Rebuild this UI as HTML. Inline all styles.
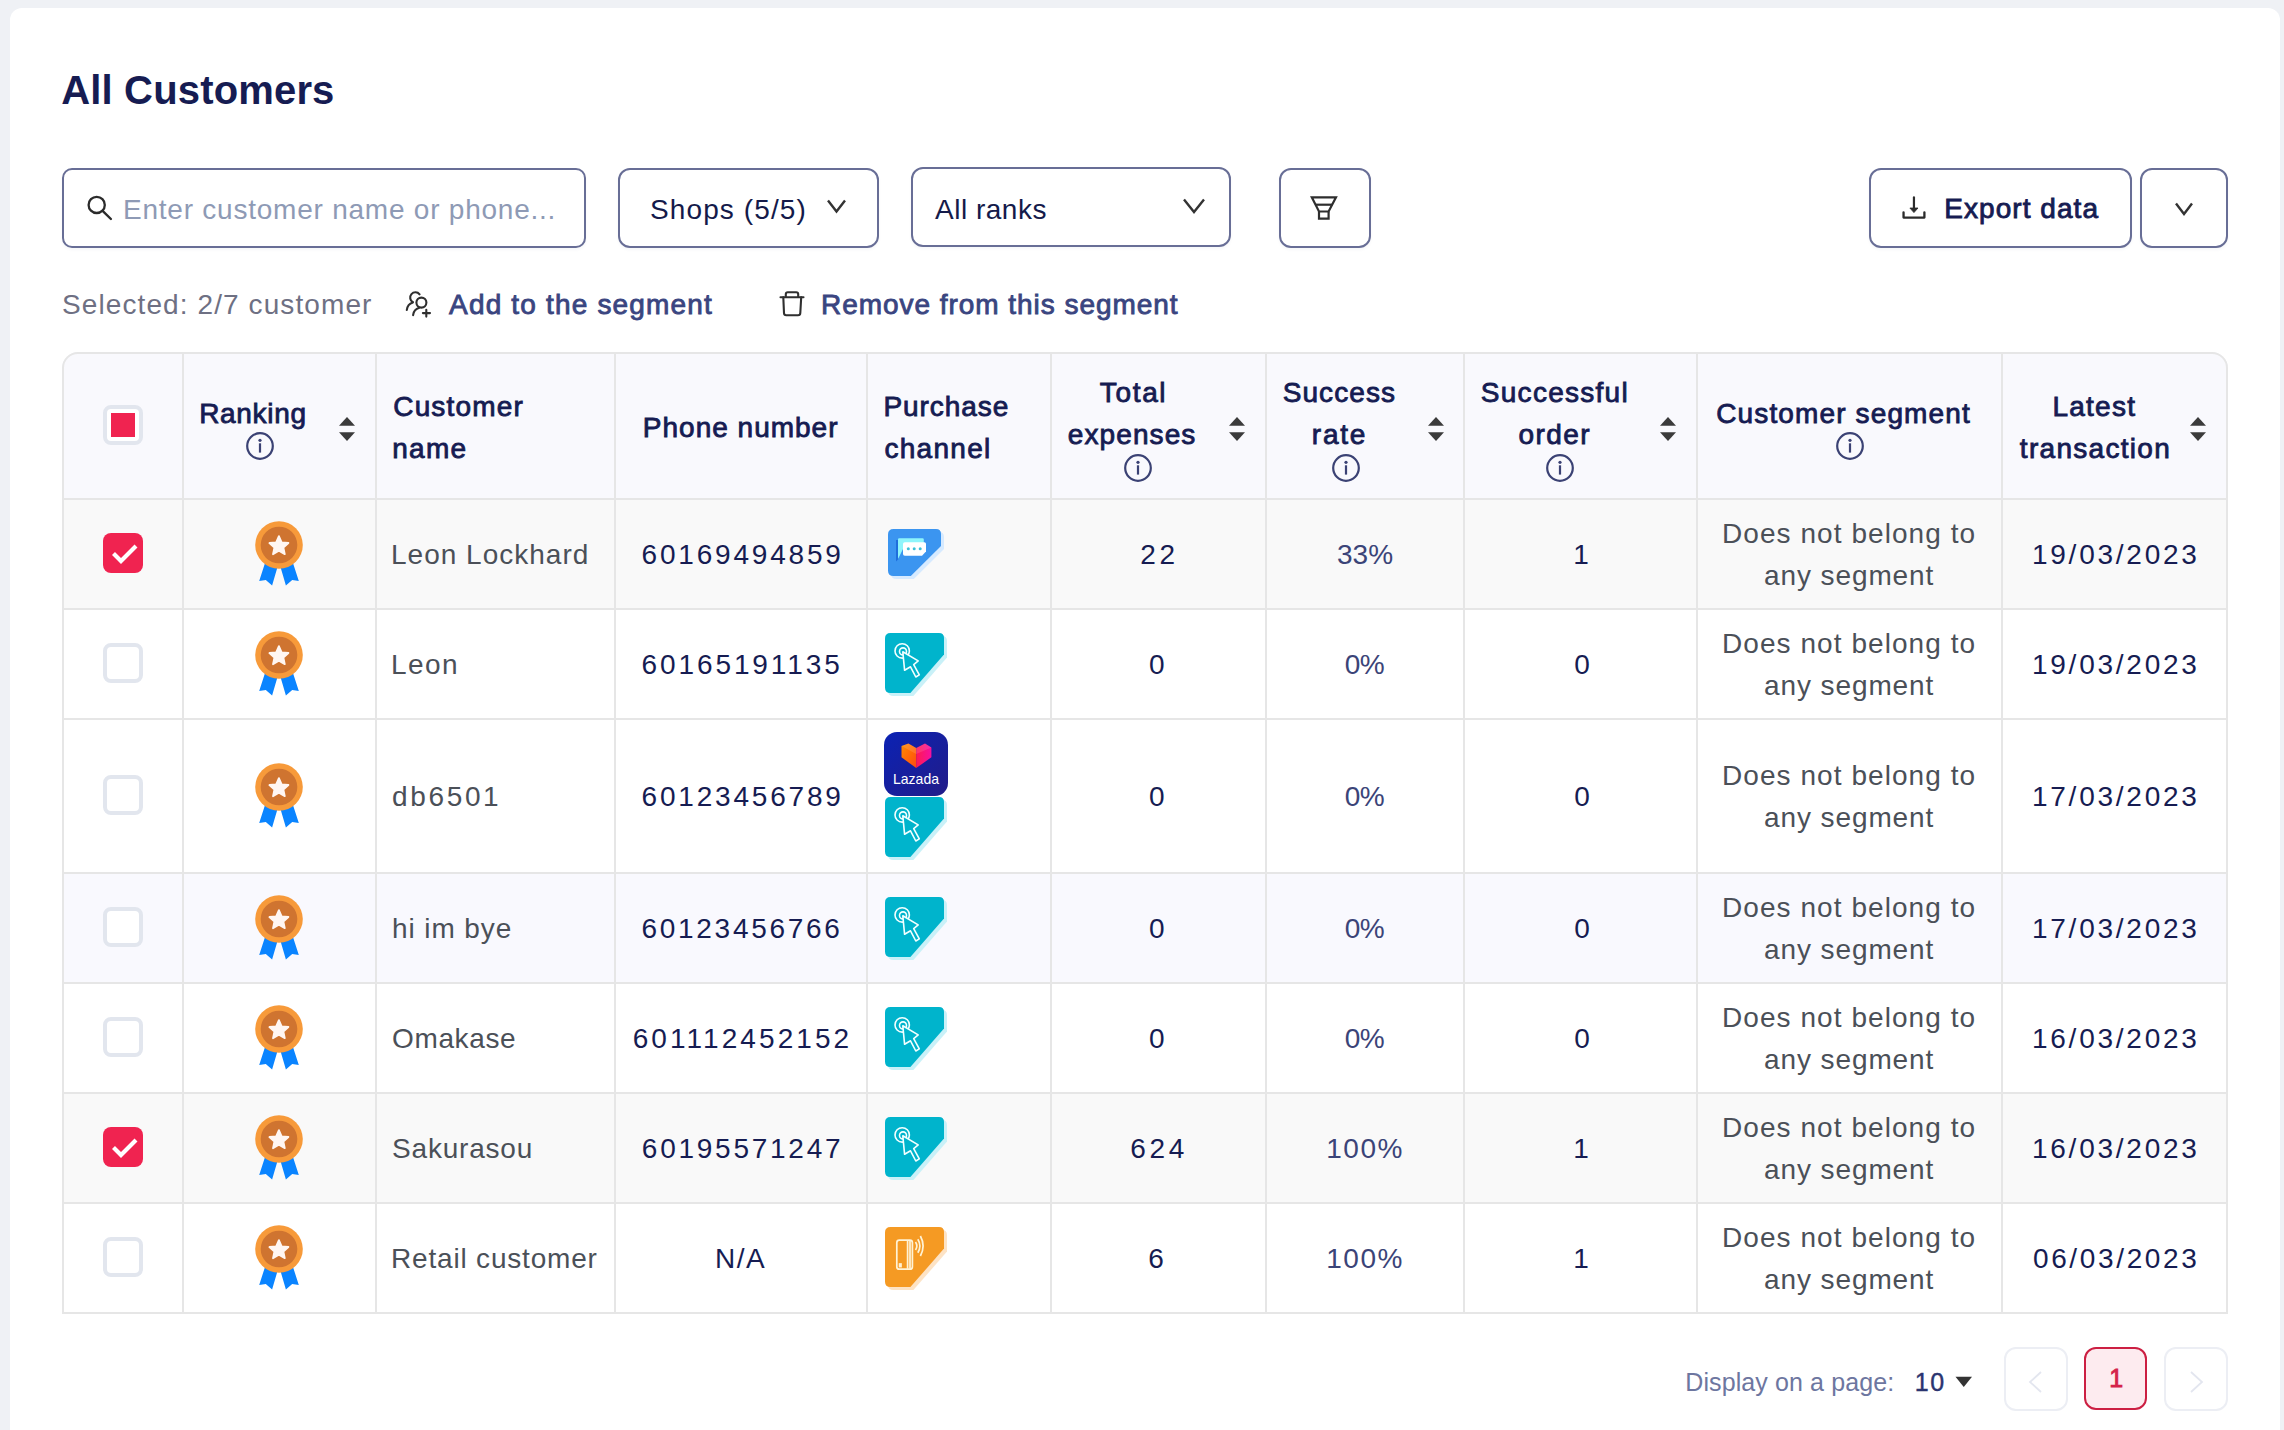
<!DOCTYPE html>
<html><head><meta charset="utf-8"><title>All Customers</title>
<style>
html,body{margin:0;padding:0;}
body{width:2284px;height:1430px;overflow:hidden;background:#eff1f5;position:relative;font-family:"Liberation Sans",sans-serif;}
body>div,body>svg{position:absolute;box-sizing:content-box;}
.t{white-space:nowrap;}
</style></head><body>
<div style="left:10px;top:8px;width:2270px;height:1440px;background:#fff;border-radius:12px;"></div>
<div class="t" id="t0" style="left:61.20px;top:69.64px;font-size:40px;line-height:40px;color:#161c52;font-weight:700;letter-spacing:0.167px;">All Customers</div>
<div style="left:62px;top:168px;width:520px;height:76px;border:2px solid #686e96;border-radius:10px;background:#fff;box-shadow:0 2px 3px rgba(30,40,90,0.04);"></div>
<svg style="left:86px;top:194px;" width="28" height="28" viewBox="0 0 28 28"><circle cx="10.7" cy="10.9" r="8.1" fill="none" stroke="#2b2b2b" stroke-width="2.3"/><line x1="16.6" y1="16.8" x2="24.9" y2="25" stroke="#2b2b2b" stroke-width="2.4" stroke-linecap="round"/></svg>
<div class="t" id="t1" style="left:123.04px;top:195.50px;font-size:28px;line-height:28px;color:#8e9ab5;letter-spacing:0.767px;">Enter customer name or phone...</div>
<div style="left:618px;top:168px;width:257px;height:76px;border:2px solid #686e96;border-radius:12px;background:#fff;box-shadow:0 2px 3px rgba(30,40,90,0.04);"></div>
<div class="t" id="t2" style="left:650.04px;top:195.80px;font-size:28px;line-height:28px;color:#141a4a;letter-spacing:1.100px;">Shops (5/5)</div>
<svg style="left:826px;top:198px;" width="21" height="16" viewBox="0 0 21 16"><polyline points="2,2.5 10.5,13.5 19,2.5" fill="none" stroke="#333" stroke-width="2.4"/></svg>
<div style="left:911px;top:167px;width:316px;height:76px;border:2px solid #686e96;border-radius:12px;background:#fff;box-shadow:0 2px 3px rgba(30,40,90,0.04);"></div>
<div class="t" id="t3" style="left:935.04px;top:195.80px;font-size:28px;line-height:28px;color:#141a4a;letter-spacing:0.500px;">All ranks</div>
<svg style="left:1182px;top:197px;" width="24" height="18" viewBox="0 0 24 18"><polyline points="2,2.5 12,15 22,2.5" fill="none" stroke="#333" stroke-width="2.4"/></svg>
<div style="left:1279px;top:168px;width:88px;height:76px;border:2px solid #686e96;border-radius:12px;background:#fff;box-shadow:0 2px 3px rgba(30,40,90,0.04);"></div>
<svg style="left:1308px;top:194px;" width="32" height="28" viewBox="0 0 32 28"><g fill="none" stroke="#2e2e2e" stroke-width="2.2"><path d="M3.8 3.3 H28 L20.6 17.5 H11 Z"/><path d="M7.5 10.7 H24.3"/><path d="M11 17.5 V24.6 H20.6 V17.5"/></g></svg>
<div style="left:1869px;top:168px;width:259px;height:76px;border:2px solid #686e96;border-radius:12px;background:#fff;box-shadow:0 2px 3px rgba(30,40,90,0.04);"></div>
<svg style="left:1900px;top:195px;" width="28" height="26" viewBox="0 0 28 26"><line x1="13.95" y1="2.4" x2="13.95" y2="14" stroke="#2b2b2b" stroke-width="2.2" stroke-linecap="round"/><polygon points="9.9,13 18,13 13.95,17.6" fill="#2b2b2b" stroke="#2b2b2b" stroke-width="0.8" stroke-linejoin="round"/><path d="M3.55 17.3 V22.6 H24.4 V17.3" fill="none" stroke="#2b2b2b" stroke-width="2.3" stroke-linecap="round" stroke-linejoin="round"/></svg>
<div class="t" id="t4" style="left:1944.24px;top:195.00px;font-size:28px;line-height:28px;color:#161c52;-webkit-text-stroke:0.85px #161c52;letter-spacing:1.060px;">Export data</div>
<div style="left:2140px;top:168px;width:84px;height:76px;border:2px solid #686e96;border-radius:12px;background:#fff;box-shadow:0 2px 3px rgba(30,40,90,0.04);"></div>
<svg style="left:2174px;top:201px;" width="20" height="16" viewBox="0 0 20 16"><polyline points="2,2.5 10,13 18,2.5" fill="none" stroke="#333" stroke-width="2.4"/></svg>
<div class="t" id="t5" style="left:62.04px;top:290.80px;font-size:28px;line-height:28px;color:#6e7083;letter-spacing:1.095px;">Selected: 2/7 customer</div>
<svg style="left:400px;top:286px;" width="36" height="36" viewBox="0 0 36 36"><g fill="none" stroke="#2f2f2f" stroke-width="2.1" stroke-linecap="round"><path d="M19.6 8.3 A5.3 5.3 0 1 0 12.8 16.2"/><path d="M12.8 16.4 C9.2 17.4 7.2 20.5 6.8 24"/><circle cx="21.4" cy="16.6" r="5"/><path d="M19.3 21.8 C15.5 22.8 13.5 25.5 13.1 29.2"/><path d="M22.9 27.1 H30 M26.3 23.7 V30.6"/></g></svg>
<div class="t" id="t6" style="left:449.04px;top:290.80px;font-size:28px;line-height:28px;color:#3a4580;-webkit-text-stroke:0.85px #3a4580;letter-spacing:1.176px;">Add to the segment</div>
<svg style="left:774px;top:286px;" width="36" height="36" viewBox="0 0 36 36"><g fill="none" stroke="#2f2f2f" stroke-width="2.1" stroke-linecap="round"><path d="M6.5 11.2 H29.5"/><path d="M11.8 11 V8.3 Q11.8 6.3 13.8 6.3 H22.2 Q24.2 6.3 24.2 8.3 V11"/><path d="M9.3 11.3 L10 27 Q10.1 29.2 12.3 29.2 H24 Q26.2 29.2 26.3 27 L27.2 11.3"/></g></svg>
<div class="t" id="t7" style="left:821.04px;top:290.80px;font-size:28px;line-height:28px;color:#3a4580;-webkit-text-stroke:0.85px #3a4580;letter-spacing:0.957px;">Remove from this segment</div>
<div style="left:62px;top:352px;width:2166px;height:962px;border-radius:16px 16px 0 0;overflow:hidden;background:#fff;"><div style="position:absolute;left:0;top:0;width:100%;height:146px;background:#f9f9fd"></div><div style="position:absolute;left:0;top:256px;width:100%;height:0px;"></div><div style="position:absolute;left:0;top:148px;width:100%;height:108px;background:#f9f9f9"></div><div style="position:absolute;left:0;top:522px;width:100%;height:108px;background:#f9f9fe"></div><div style="position:absolute;left:0;top:742px;width:100%;height:108px;background:#f9f9f9"></div></div>
<div style="left:182px;top:354px;width:2px;height:960px;background:#e6e6e6;"></div>
<div style="left:375px;top:354px;width:2px;height:960px;background:#e6e6e6;"></div>
<div style="left:614px;top:354px;width:2px;height:960px;background:#e6e6e6;"></div>
<div style="left:866px;top:354px;width:2px;height:960px;background:#e6e6e6;"></div>
<div style="left:1050px;top:354px;width:2px;height:960px;background:#e6e6e6;"></div>
<div style="left:1265px;top:354px;width:2px;height:960px;background:#e6e6e6;"></div>
<div style="left:1463px;top:354px;width:2px;height:960px;background:#e6e6e6;"></div>
<div style="left:1696px;top:354px;width:2px;height:960px;background:#e6e6e6;"></div>
<div style="left:2001px;top:354px;width:2px;height:960px;background:#e6e6e6;"></div>
<div style="left:62px;top:498px;width:2166px;height:2px;background:#e6e6e6;"></div>
<div style="left:62px;top:608px;width:2166px;height:2px;background:#e6e6e6;"></div>
<div style="left:62px;top:718px;width:2166px;height:2px;background:#e6e6e6;"></div>
<div style="left:62px;top:872px;width:2166px;height:2px;background:#e6e6e6;"></div>
<div style="left:62px;top:982px;width:2166px;height:2px;background:#e6e6e6;"></div>
<div style="left:62px;top:1092px;width:2166px;height:2px;background:#e6e6e6;"></div>
<div style="left:62px;top:1202px;width:2166px;height:2px;background:#e6e6e6;"></div>
<div style="left:62px;top:1312px;width:2166px;height:2px;background:#e6e6e6;"></div>
<div style="left:62px;top:352px;width:2162px;height:958px;border:2px solid #e6e6e6;border-radius:16px 16px 0 0;"></div>
<div style="left:103px;top:405px;width:32px;height:32px;border:4px solid #e2e6ee;border-radius:8px;background:#fff"></div>
<div style="left:111px;top:413px;width:24px;height:24px;background:#f02350;"></div>
<div class="t" id="t8" style="left:199.24px;top:399.90px;font-size:28px;line-height:28px;color:#161c52;-webkit-text-stroke:0.85px #161c52;letter-spacing:0.667px;">Ranking</div>
<svg style="left:245px;top:431px;" width="30" height="30" viewBox="0 0 30 30"><circle cx="15" cy="15" r="12.8" fill="none" stroke="#3b4274" stroke-width="2.2"/><circle cx="15" cy="9.3" r="1.6" fill="#3b4274"/><rect x="13.9" y="12.3" width="2.2" height="9.3" fill="#3b4274"/></svg>
<svg style="left:339px;top:417px;" width="16" height="25" viewBox="0 0 16 25"><polygon points="0,8.8 8,0 16,8.8" fill="#3b3b3b"/><polygon points="0,15.2 16,15.2 8,24" fill="#3b3b3b"/></svg>
<div class="t" id="t9" style="left:393.24px;top:392.90px;font-size:28px;line-height:28px;color:#161c52;-webkit-text-stroke:0.85px #161c52;letter-spacing:1.171px;">Customer</div>
<div class="t" id="t10" style="left:392.24px;top:435.00px;font-size:28px;line-height:28px;color:#161c52;-webkit-text-stroke:0.85px #161c52;letter-spacing:1.267px;">name</div>
<div class="t" id="t11" style="left:642.84px;top:414.00px;font-size:28px;line-height:28px;color:#161c52;-webkit-text-stroke:0.85px #161c52;letter-spacing:1.000px;">Phone number</div>
<div class="t" id="t12" style="left:883.44px;top:392.90px;font-size:28px;line-height:28px;color:#161c52;-webkit-text-stroke:0.85px #161c52;letter-spacing:0.943px;">Purchase</div>
<div class="t" id="t13" style="left:884.44px;top:435.00px;font-size:28px;line-height:28px;color:#161c52;-webkit-text-stroke:0.85px #161c52;letter-spacing:1.300px;">channel</div>
<div class="t" id="t14" style="left:1099.84px;top:378.90px;font-size:28px;line-height:28px;color:#161c52;-webkit-text-stroke:0.85px #161c52;letter-spacing:1.650px;">Total</div>
<div class="t" id="t15" style="left:1067.84px;top:420.60px;font-size:28px;line-height:28px;color:#161c52;-webkit-text-stroke:0.85px #161c52;letter-spacing:1.086px;">expenses</div>
<svg style="left:1123px;top:453px;" width="30" height="30" viewBox="0 0 30 30"><circle cx="15" cy="15" r="12.8" fill="none" stroke="#3b4274" stroke-width="2.2"/><circle cx="15" cy="9.3" r="1.6" fill="#3b4274"/><rect x="13.9" y="12.3" width="2.2" height="9.3" fill="#3b4274"/></svg>
<svg style="left:1229px;top:417px;" width="16" height="25" viewBox="0 0 16 25"><polygon points="0,8.8 8,0 16,8.8" fill="#3b3b3b"/><polygon points="0,15.2 16,15.2 8,24" fill="#3b3b3b"/></svg>
<div class="t" id="t16" style="left:1282.64px;top:378.50px;font-size:28px;line-height:28px;color:#161c52;-webkit-text-stroke:0.85px #161c52;letter-spacing:1.100px;">Success</div>
<div class="t" id="t17" style="left:1311.84px;top:420.80px;font-size:28px;line-height:28px;color:#161c52;-webkit-text-stroke:0.85px #161c52;letter-spacing:1.733px;">rate</div>
<svg style="left:1331px;top:453px;" width="30" height="30" viewBox="0 0 30 30"><circle cx="15" cy="15" r="12.8" fill="none" stroke="#3b4274" stroke-width="2.2"/><circle cx="15" cy="9.3" r="1.6" fill="#3b4274"/><rect x="13.9" y="12.3" width="2.2" height="9.3" fill="#3b4274"/></svg>
<svg style="left:1427.5px;top:417px;" width="16" height="25" viewBox="0 0 16 25"><polygon points="0,8.8 8,0 16,8.8" fill="#3b3b3b"/><polygon points="0,15.2 16,15.2 8,24" fill="#3b3b3b"/></svg>
<div class="t" id="t18" style="left:1480.84px;top:378.50px;font-size:28px;line-height:28px;color:#161c52;-webkit-text-stroke:0.85px #161c52;letter-spacing:1.267px;">Successful</div>
<div class="t" id="t19" style="left:1518.44px;top:420.80px;font-size:28px;line-height:28px;color:#161c52;-webkit-text-stroke:0.85px #161c52;letter-spacing:1.450px;">order</div>
<svg style="left:1545px;top:453px;" width="30" height="30" viewBox="0 0 30 30"><circle cx="15" cy="15" r="12.8" fill="none" stroke="#3b4274" stroke-width="2.2"/><circle cx="15" cy="9.3" r="1.6" fill="#3b4274"/><rect x="13.9" y="12.3" width="2.2" height="9.3" fill="#3b4274"/></svg>
<svg style="left:1660px;top:417px;" width="16" height="25" viewBox="0 0 16 25"><polygon points="0,8.8 8,0 16,8.8" fill="#3b3b3b"/><polygon points="0,15.2 16,15.2 8,24" fill="#3b3b3b"/></svg>
<div class="t" id="t20" style="left:1716.24px;top:399.80px;font-size:28px;line-height:28px;color:#161c52;-webkit-text-stroke:0.85px #161c52;letter-spacing:1.133px;">Customer segment</div>
<svg style="left:1835px;top:431px;" width="30" height="30" viewBox="0 0 30 30"><circle cx="15" cy="15" r="12.8" fill="none" stroke="#3b4274" stroke-width="2.2"/><circle cx="15" cy="9.3" r="1.6" fill="#3b4274"/><rect x="13.9" y="12.3" width="2.2" height="9.3" fill="#3b4274"/></svg>
<div class="t" id="t21" style="left:2052.44px;top:392.90px;font-size:28px;line-height:28px;color:#161c52;-webkit-text-stroke:0.85px #161c52;letter-spacing:1.240px;">Latest</div>
<div class="t" id="t22" style="left:2019.84px;top:434.60px;font-size:28px;line-height:28px;color:#161c52;-webkit-text-stroke:0.85px #161c52;letter-spacing:1.300px;">transaction</div>
<svg style="left:2190px;top:417px;" width="16" height="25" viewBox="0 0 16 25"><polygon points="0,8.8 8,0 16,8.8" fill="#3b3b3b"/><polygon points="0,15.2 16,15.2 8,24" fill="#3b3b3b"/></svg>
<div style="left:103px;top:533px;width:40px;height:40px;border-radius:8px;background:#f02350"></div>
<svg style="left:103px;top:533px;" width="40" height="40" viewBox="0 0 40 40"><polyline points="10.5,20.5 18,28 33,13" fill="none" stroke="#fff" stroke-width="4.2"/></svg>
<svg style="left:253px;top:519.0px;" width="52" height="70" viewBox="0 0 52 70"><path d="M13.5 38 L11.7 44.9 L6.2 62 L12.8 61 L19.1 66.6 L24 49.7 L26.5 40 Z" fill="#0a84ff"/><path d="M38.5 38 L40.3 44.9 L45.8 62 L39.2 61 L32.9 66.6 L28 49.7 L25.5 40 Z" fill="#0a84ff"/><circle cx="26" cy="26" r="23.8" fill="#f79a3a"/><circle cx="26" cy="26" r="18.3" fill="#cf7430"/><polygon points="25.90,17.10 28.66,23.30 35.41,24.01 30.37,28.55 31.78,35.19 25.90,31.80 20.02,35.19 21.43,28.55 16.39,24.01 23.14,23.30" fill="#fff6f2" stroke="#fff6f2" stroke-width="1.8" stroke-linejoin="round"/></svg>
<div class="t" id="t23" style="left:391.04px;top:540.80px;font-size:28px;line-height:28px;color:#4b5058;letter-spacing:1.000px;">Leon Lockhard</div>
<div class="t" id="t24" style="left:641.54px;top:540.80px;font-size:28px;line-height:28px;color:#161c52;letter-spacing:2.800px;">60169494859</div>
<svg style="left:888px;top:529px;" width="58" height="52" viewBox="0 0 58 52"><path d="M5.5 0 H48 Q53 0 53 5 V16.9 L22.8 47 H5.5 Q0 47 0 41.5 V5.5 Q0 0 5.5 0 Z" transform="translate(3,3)" fill="#d6eaff"/><path d="M5.5 0 H48 Q53 0 53 5 V16.9 L22.8 47 H5.5 Q0 47 0 41.5 V5.5 Q0 0 5.5 0 Z" fill="#3b95f0"/><path d="M8 11 H10.5 V30 L8 32.5 Z" fill="#1f6fdc"/><path d="M10 10.6 Q10 9.3 11.3 9.3 H34.5 Q35.8 9.3 35.8 10.6 V20 H15 L10 30 Z" fill="#8ef5fb"/><path d="M15 15 Q15 13.2 16.8 13.2 H36.3 Q38 13.2 38 15 V22.6 L34 26.8 H16.8 Q15 26.8 15 25 Z" fill="#fff"/><circle cx="20.3" cy="19.8" r="1.5" fill="#3cc0d8"/><circle cx="26.2" cy="19.8" r="1.5" fill="#3cc0d8"/><circle cx="32.2" cy="19.8" r="1.5" fill="#3cc0d8"/></svg>
<div class="t" id="t25" style="left:1140.14px;top:540.80px;font-size:28px;line-height:28px;color:#161c52;letter-spacing:3.800px;">22</div>
<div class="t" id="t26" style="left:1336.94px;top:540.80px;font-size:28px;line-height:28px;color:#3b4478;letter-spacing:0.100px;">33%</div>
<div class="t" id="t27" style="left:1573.14px;top:540.80px;font-size:28px;line-height:28px;color:#161c52;">1</div>
<div class="t" id="t28" style="left:1722.04px;top:520.30px;font-size:28px;line-height:28px;color:#4b5058;letter-spacing:1.059px;">Does not belong to</div>
<div class="t" id="t29" style="left:1764.04px;top:562.30px;font-size:28px;line-height:28px;color:#4b5058;letter-spacing:0.900px;">any segment</div>
<div class="t" id="t30" style="left:2031.94px;top:540.80px;font-size:28px;line-height:28px;color:#161c52;letter-spacing:2.756px;">19/03/2023</div>
<div style="left:103px;top:643px;width:32px;height:32px;border:4px solid #e2e6ee;border-radius:8px;background:#fff"></div>
<svg style="left:253px;top:629.0px;" width="52" height="70" viewBox="0 0 52 70"><path d="M13.5 38 L11.7 44.9 L6.2 62 L12.8 61 L19.1 66.6 L24 49.7 L26.5 40 Z" fill="#0a84ff"/><path d="M38.5 38 L40.3 44.9 L45.8 62 L39.2 61 L32.9 66.6 L28 49.7 L25.5 40 Z" fill="#0a84ff"/><circle cx="26" cy="26" r="23.8" fill="#f79a3a"/><circle cx="26" cy="26" r="18.3" fill="#cf7430"/><polygon points="25.90,17.10 28.66,23.30 35.41,24.01 30.37,28.55 31.78,35.19 25.90,31.80 20.02,35.19 21.43,28.55 16.39,24.01 23.14,23.30" fill="#fff6f2" stroke="#fff6f2" stroke-width="1.8" stroke-linejoin="round"/></svg>
<div class="t" id="t31" style="left:391.04px;top:650.80px;font-size:28px;line-height:28px;color:#4b5058;letter-spacing:1.400px;">Leon</div>
<div class="t" id="t32" style="left:641.54px;top:650.80px;font-size:28px;line-height:28px;color:#161c52;letter-spacing:2.900px;">60165191135</div>
<svg style="left:885px;top:633px;" width="64" height="65" viewBox="0 0 64 65"><path d="M5.5 0 H54 Q59 0 59 5 V21.6 L25.4 60 H5.5 Q0 60 0 54.5 V5.5 Q0 0 5.5 0 Z" transform="translate(3,3)" fill="#c9f1f8"/><path d="M5.5 0 H54 Q59 0 59 5 V21.6 L25.4 60 H5.5 Q0 60 0 54.5 V5.5 Q0 0 5.5 0 Z" fill="#00b4cc"/><g fill="none" stroke="#f2ffff" stroke-width="1.6"><circle cx="17.2" cy="17.9" r="7.2"/><circle cx="18" cy="18.4" r="3.5"/><path d="M17.8 18.8 L19.6 37.3 L25.5 33.8 L30.8 44 L34.3 41.9 L28.7 31.7 L33.2 27.9 Z" fill="#00b4cc" stroke-linejoin="round"/></g></svg>
<div class="t" id="t33" style="left:1149.04px;top:650.80px;font-size:28px;line-height:28px;color:#161c52;">0</div>
<div class="t" id="t34" style="left:1344.84px;top:650.80px;font-size:28px;line-height:28px;color:#3b4478;letter-spacing:-0.600px;">0%</div>
<div class="t" id="t35" style="left:1574.14px;top:650.80px;font-size:28px;line-height:28px;color:#161c52;">0</div>
<div class="t" id="t36" style="left:1722.04px;top:630.30px;font-size:28px;line-height:28px;color:#4b5058;letter-spacing:1.059px;">Does not belong to</div>
<div class="t" id="t37" style="left:1764.04px;top:672.30px;font-size:28px;line-height:28px;color:#4b5058;letter-spacing:0.900px;">any segment</div>
<div class="t" id="t38" style="left:2031.94px;top:650.80px;font-size:28px;line-height:28px;color:#161c52;letter-spacing:2.756px;">19/03/2023</div>
<div style="left:103px;top:775px;width:32px;height:32px;border:4px solid #e2e6ee;border-radius:8px;background:#fff"></div>
<svg style="left:253px;top:761.0px;" width="52" height="70" viewBox="0 0 52 70"><path d="M13.5 38 L11.7 44.9 L6.2 62 L12.8 61 L19.1 66.6 L24 49.7 L26.5 40 Z" fill="#0a84ff"/><path d="M38.5 38 L40.3 44.9 L45.8 62 L39.2 61 L32.9 66.6 L28 49.7 L25.5 40 Z" fill="#0a84ff"/><circle cx="26" cy="26" r="23.8" fill="#f79a3a"/><circle cx="26" cy="26" r="18.3" fill="#cf7430"/><polygon points="25.90,17.10 28.66,23.30 35.41,24.01 30.37,28.55 31.78,35.19 25.90,31.80 20.02,35.19 21.43,28.55 16.39,24.01 23.14,23.30" fill="#fff6f2" stroke="#fff6f2" stroke-width="1.8" stroke-linejoin="round"/></svg>
<div class="t" id="t39" style="left:392.04px;top:782.80px;font-size:28px;line-height:28px;color:#4b5058;letter-spacing:2.640px;">db6501</div>
<div class="t" id="t40" style="left:641.54px;top:782.80px;font-size:28px;line-height:28px;color:#161c52;letter-spacing:2.800px;">60123456789</div>
<svg style="left:884px;top:732px;" width="64" height="64" viewBox="0 0 64 64"><defs><linearGradient id="lz" x1="0" y1="0" x2="1" y2="1"><stop offset="0" stop-color="#0b22b4"/><stop offset="1" stop-color="#221c88"/></linearGradient><linearGradient id="hl" x1="0" y1="0" x2="1" y2="1"><stop offset="0" stop-color="#ff8a00"/><stop offset="1" stop-color="#ff4a10"/></linearGradient><linearGradient id="hr" x1="0" y1="0" x2="1" y2="0"><stop offset="0" stop-color="#ff1a50"/><stop offset="1" stop-color="#f510a0"/></linearGradient></defs><rect x="0" y="0" width="64" height="64" rx="13" fill="url(#lz)"/><path d="M17.5 14.1 L24.4 11.6 L32.2 16 V36.1 L17.5 25.3 Z" fill="url(#hl)"/><path d="M32.2 16 L41 11.6 L47.4 15.5 V25.3 L32.2 36.1 Z" fill="url(#hr)"/><path d="M17.5 14.1 L32.2 22 L47.4 15.5 L41 11.6 L32.2 16 L24.4 11.6 Z" fill="#ffffff" fill-opacity="0.12"/><text x="9" y="52.3" textLength="46" lengthAdjust="spacingAndGlyphs" font-family="Liberation Sans" font-size="14.5" fill="#fff">Lazada</text></svg>
<svg style="left:885px;top:797px;" width="64" height="65" viewBox="0 0 64 65"><path d="M5.5 0 H54 Q59 0 59 5 V21.6 L25.4 60 H5.5 Q0 60 0 54.5 V5.5 Q0 0 5.5 0 Z" transform="translate(3,3)" fill="#c9f1f8"/><path d="M5.5 0 H54 Q59 0 59 5 V21.6 L25.4 60 H5.5 Q0 60 0 54.5 V5.5 Q0 0 5.5 0 Z" fill="#00b4cc"/><g fill="none" stroke="#f2ffff" stroke-width="1.6"><circle cx="17.2" cy="17.9" r="7.2"/><circle cx="18" cy="18.4" r="3.5"/><path d="M17.8 18.8 L19.6 37.3 L25.5 33.8 L30.8 44 L34.3 41.9 L28.7 31.7 L33.2 27.9 Z" fill="#00b4cc" stroke-linejoin="round"/></g></svg>
<div class="t" id="t41" style="left:1149.04px;top:782.80px;font-size:28px;line-height:28px;color:#161c52;">0</div>
<div class="t" id="t42" style="left:1344.84px;top:782.80px;font-size:28px;line-height:28px;color:#3b4478;letter-spacing:-0.600px;">0%</div>
<div class="t" id="t43" style="left:1574.14px;top:782.80px;font-size:28px;line-height:28px;color:#161c52;">0</div>
<div class="t" id="t44" style="left:1722.04px;top:762.30px;font-size:28px;line-height:28px;color:#4b5058;letter-spacing:1.059px;">Does not belong to</div>
<div class="t" id="t45" style="left:1764.04px;top:804.30px;font-size:28px;line-height:28px;color:#4b5058;letter-spacing:0.900px;">any segment</div>
<div class="t" id="t46" style="left:2031.94px;top:782.80px;font-size:28px;line-height:28px;color:#161c52;letter-spacing:2.756px;">17/03/2023</div>
<div style="left:103px;top:907px;width:32px;height:32px;border:4px solid #e2e6ee;border-radius:8px;background:#fff"></div>
<svg style="left:253px;top:893.0px;" width="52" height="70" viewBox="0 0 52 70"><path d="M13.5 38 L11.7 44.9 L6.2 62 L12.8 61 L19.1 66.6 L24 49.7 L26.5 40 Z" fill="#0a84ff"/><path d="M38.5 38 L40.3 44.9 L45.8 62 L39.2 61 L32.9 66.6 L28 49.7 L25.5 40 Z" fill="#0a84ff"/><circle cx="26" cy="26" r="23.8" fill="#f79a3a"/><circle cx="26" cy="26" r="18.3" fill="#cf7430"/><polygon points="25.90,17.10 28.66,23.30 35.41,24.01 30.37,28.55 31.78,35.19 25.90,31.80 20.02,35.19 21.43,28.55 16.39,24.01 23.14,23.30" fill="#fff6f2" stroke="#fff6f2" stroke-width="1.8" stroke-linejoin="round"/></svg>
<div class="t" id="t47" style="left:392.04px;top:914.80px;font-size:28px;line-height:28px;color:#4b5058;letter-spacing:0.900px;">hi im bye</div>
<div class="t" id="t48" style="left:641.54px;top:914.80px;font-size:28px;line-height:28px;color:#161c52;letter-spacing:2.700px;">60123456766</div>
<svg style="left:885px;top:897px;" width="64" height="65" viewBox="0 0 64 65"><path d="M5.5 0 H54 Q59 0 59 5 V21.6 L25.4 60 H5.5 Q0 60 0 54.5 V5.5 Q0 0 5.5 0 Z" transform="translate(3,3)" fill="#c9f1f8"/><path d="M5.5 0 H54 Q59 0 59 5 V21.6 L25.4 60 H5.5 Q0 60 0 54.5 V5.5 Q0 0 5.5 0 Z" fill="#00b4cc"/><g fill="none" stroke="#f2ffff" stroke-width="1.6"><circle cx="17.2" cy="17.9" r="7.2"/><circle cx="18" cy="18.4" r="3.5"/><path d="M17.8 18.8 L19.6 37.3 L25.5 33.8 L30.8 44 L34.3 41.9 L28.7 31.7 L33.2 27.9 Z" fill="#00b4cc" stroke-linejoin="round"/></g></svg>
<div class="t" id="t49" style="left:1149.04px;top:914.80px;font-size:28px;line-height:28px;color:#161c52;">0</div>
<div class="t" id="t50" style="left:1344.84px;top:914.80px;font-size:28px;line-height:28px;color:#3b4478;letter-spacing:-0.600px;">0%</div>
<div class="t" id="t51" style="left:1574.14px;top:914.80px;font-size:28px;line-height:28px;color:#161c52;">0</div>
<div class="t" id="t52" style="left:1722.04px;top:894.30px;font-size:28px;line-height:28px;color:#4b5058;letter-spacing:1.059px;">Does not belong to</div>
<div class="t" id="t53" style="left:1764.04px;top:936.30px;font-size:28px;line-height:28px;color:#4b5058;letter-spacing:0.900px;">any segment</div>
<div class="t" id="t54" style="left:2031.94px;top:914.80px;font-size:28px;line-height:28px;color:#161c52;letter-spacing:2.756px;">17/03/2023</div>
<div style="left:103px;top:1017px;width:32px;height:32px;border:4px solid #e2e6ee;border-radius:8px;background:#fff"></div>
<svg style="left:253px;top:1003.0px;" width="52" height="70" viewBox="0 0 52 70"><path d="M13.5 38 L11.7 44.9 L6.2 62 L12.8 61 L19.1 66.6 L24 49.7 L26.5 40 Z" fill="#0a84ff"/><path d="M38.5 38 L40.3 44.9 L45.8 62 L39.2 61 L32.9 66.6 L28 49.7 L25.5 40 Z" fill="#0a84ff"/><circle cx="26" cy="26" r="23.8" fill="#f79a3a"/><circle cx="26" cy="26" r="18.3" fill="#cf7430"/><polygon points="25.90,17.10 28.66,23.30 35.41,24.01 30.37,28.55 31.78,35.19 25.90,31.80 20.02,35.19 21.43,28.55 16.39,24.01 23.14,23.30" fill="#fff6f2" stroke="#fff6f2" stroke-width="1.8" stroke-linejoin="round"/></svg>
<div class="t" id="t55" style="left:392.04px;top:1024.80px;font-size:28px;line-height:28px;color:#4b5058;letter-spacing:0.633px;">Omakase</div>
<div class="t" id="t56" style="left:632.64px;top:1024.80px;font-size:28px;line-height:28px;color:#161c52;letter-spacing:3.073px;">601112452152</div>
<svg style="left:885px;top:1007px;" width="64" height="65" viewBox="0 0 64 65"><path d="M5.5 0 H54 Q59 0 59 5 V21.6 L25.4 60 H5.5 Q0 60 0 54.5 V5.5 Q0 0 5.5 0 Z" transform="translate(3,3)" fill="#c9f1f8"/><path d="M5.5 0 H54 Q59 0 59 5 V21.6 L25.4 60 H5.5 Q0 60 0 54.5 V5.5 Q0 0 5.5 0 Z" fill="#00b4cc"/><g fill="none" stroke="#f2ffff" stroke-width="1.6"><circle cx="17.2" cy="17.9" r="7.2"/><circle cx="18" cy="18.4" r="3.5"/><path d="M17.8 18.8 L19.6 37.3 L25.5 33.8 L30.8 44 L34.3 41.9 L28.7 31.7 L33.2 27.9 Z" fill="#00b4cc" stroke-linejoin="round"/></g></svg>
<div class="t" id="t57" style="left:1149.04px;top:1024.80px;font-size:28px;line-height:28px;color:#161c52;">0</div>
<div class="t" id="t58" style="left:1344.84px;top:1024.80px;font-size:28px;line-height:28px;color:#3b4478;letter-spacing:-0.600px;">0%</div>
<div class="t" id="t59" style="left:1574.14px;top:1024.80px;font-size:28px;line-height:28px;color:#161c52;">0</div>
<div class="t" id="t60" style="left:1722.04px;top:1004.30px;font-size:28px;line-height:28px;color:#4b5058;letter-spacing:1.059px;">Does not belong to</div>
<div class="t" id="t61" style="left:1764.04px;top:1046.30px;font-size:28px;line-height:28px;color:#4b5058;letter-spacing:0.900px;">any segment</div>
<div class="t" id="t62" style="left:2031.94px;top:1024.80px;font-size:28px;line-height:28px;color:#161c52;letter-spacing:2.756px;">16/03/2023</div>
<div style="left:103px;top:1127px;width:40px;height:40px;border-radius:8px;background:#f02350"></div>
<svg style="left:103px;top:1127px;" width="40" height="40" viewBox="0 0 40 40"><polyline points="10.5,20.5 18,28 33,13" fill="none" stroke="#fff" stroke-width="4.2"/></svg>
<svg style="left:253px;top:1113.0px;" width="52" height="70" viewBox="0 0 52 70"><path d="M13.5 38 L11.7 44.9 L6.2 62 L12.8 61 L19.1 66.6 L24 49.7 L26.5 40 Z" fill="#0a84ff"/><path d="M38.5 38 L40.3 44.9 L45.8 62 L39.2 61 L32.9 66.6 L28 49.7 L25.5 40 Z" fill="#0a84ff"/><circle cx="26" cy="26" r="23.8" fill="#f79a3a"/><circle cx="26" cy="26" r="18.3" fill="#cf7430"/><polygon points="25.90,17.10 28.66,23.30 35.41,24.01 30.37,28.55 31.78,35.19 25.90,31.80 20.02,35.19 21.43,28.55 16.39,24.01 23.14,23.30" fill="#fff6f2" stroke="#fff6f2" stroke-width="1.8" stroke-linejoin="round"/></svg>
<div class="t" id="t63" style="left:392.04px;top:1134.80px;font-size:28px;line-height:28px;color:#4b5058;letter-spacing:0.800px;">Sakurasou</div>
<div class="t" id="t64" style="left:641.84px;top:1134.80px;font-size:28px;line-height:28px;color:#161c52;letter-spacing:2.740px;">60195571247</div>
<svg style="left:885px;top:1117px;" width="64" height="65" viewBox="0 0 64 65"><path d="M5.5 0 H54 Q59 0 59 5 V21.6 L25.4 60 H5.5 Q0 60 0 54.5 V5.5 Q0 0 5.5 0 Z" transform="translate(3,3)" fill="#c9f1f8"/><path d="M5.5 0 H54 Q59 0 59 5 V21.6 L25.4 60 H5.5 Q0 60 0 54.5 V5.5 Q0 0 5.5 0 Z" fill="#00b4cc"/><g fill="none" stroke="#f2ffff" stroke-width="1.6"><circle cx="17.2" cy="17.9" r="7.2"/><circle cx="18" cy="18.4" r="3.5"/><path d="M17.8 18.8 L19.6 37.3 L25.5 33.8 L30.8 44 L34.3 41.9 L28.7 31.7 L33.2 27.9 Z" fill="#00b4cc" stroke-linejoin="round"/></g></svg>
<div class="t" id="t65" style="left:1130.34px;top:1134.80px;font-size:28px;line-height:28px;color:#161c52;letter-spacing:3.700px;">624</div>
<div class="t" id="t66" style="left:1326.34px;top:1134.80px;font-size:28px;line-height:28px;color:#3b4478;letter-spacing:1.467px;">100%</div>
<div class="t" id="t67" style="left:1573.14px;top:1134.80px;font-size:28px;line-height:28px;color:#161c52;">1</div>
<div class="t" id="t68" style="left:1722.04px;top:1114.30px;font-size:28px;line-height:28px;color:#4b5058;letter-spacing:1.059px;">Does not belong to</div>
<div class="t" id="t69" style="left:1764.04px;top:1156.30px;font-size:28px;line-height:28px;color:#4b5058;letter-spacing:0.900px;">any segment</div>
<div class="t" id="t70" style="left:2031.94px;top:1134.80px;font-size:28px;line-height:28px;color:#161c52;letter-spacing:2.756px;">16/03/2023</div>
<div style="left:103px;top:1237px;width:32px;height:32px;border:4px solid #e2e6ee;border-radius:8px;background:#fff"></div>
<svg style="left:253px;top:1223.0px;" width="52" height="70" viewBox="0 0 52 70"><path d="M13.5 38 L11.7 44.9 L6.2 62 L12.8 61 L19.1 66.6 L24 49.7 L26.5 40 Z" fill="#0a84ff"/><path d="M38.5 38 L40.3 44.9 L45.8 62 L39.2 61 L32.9 66.6 L28 49.7 L25.5 40 Z" fill="#0a84ff"/><circle cx="26" cy="26" r="23.8" fill="#f79a3a"/><circle cx="26" cy="26" r="18.3" fill="#cf7430"/><polygon points="25.90,17.10 28.66,23.30 35.41,24.01 30.37,28.55 31.78,35.19 25.90,31.80 20.02,35.19 21.43,28.55 16.39,24.01 23.14,23.30" fill="#fff6f2" stroke="#fff6f2" stroke-width="1.8" stroke-linejoin="round"/></svg>
<div class="t" id="t71" style="left:391.04px;top:1244.80px;font-size:28px;line-height:28px;color:#4b5058;letter-spacing:0.814px;">Retail customer</div>
<div class="t" id="t72" style="left:715.04px;top:1244.80px;font-size:28px;line-height:28px;color:#161c52;letter-spacing:1.500px;">N/A</div>
<svg style="left:885px;top:1227px;" width="64" height="65" viewBox="0 0 64 65"><path d="M5.5 0 H54 Q59 0 59 5 V21.6 L25.4 60 H5.5 Q0 60 0 54.5 V5.5 Q0 0 5.5 0 Z" transform="translate(3,3)" fill="#fde3c5"/><path d="M5.5 0 H54 Q59 0 59 5 V21.6 L25.4 60 H5.5 Q0 60 0 54.5 V5.5 Q0 0 5.5 0 Z" fill="#f59a23"/><g fill="none" stroke="#fff3d6" stroke-width="1.7"><rect x="11.8" y="13.2" width="15.6" height="29" rx="2.5"/><path d="M22.6 13.5 V41.8 M25 13.5 V41.8"/><rect x="14.6" y="37" width="1.4" height="2.6"/><path d="M30.5 15 Q33.2 19 30.5 23"/><path d="M32.8 12.3 Q37 19 32.8 25.8"/><path d="M35.4 9 Q40.8 19 35.4 29"/></g></svg>
<div class="t" id="t73" style="left:1148.34px;top:1244.80px;font-size:28px;line-height:28px;color:#161c52;">6</div>
<div class="t" id="t74" style="left:1326.34px;top:1244.80px;font-size:28px;line-height:28px;color:#3b4478;letter-spacing:1.467px;">100%</div>
<div class="t" id="t75" style="left:1573.14px;top:1244.80px;font-size:28px;line-height:28px;color:#161c52;">1</div>
<div class="t" id="t76" style="left:1722.04px;top:1224.30px;font-size:28px;line-height:28px;color:#4b5058;letter-spacing:1.059px;">Does not belong to</div>
<div class="t" id="t77" style="left:1764.04px;top:1266.30px;font-size:28px;line-height:28px;color:#4b5058;letter-spacing:0.900px;">any segment</div>
<div class="t" id="t78" style="left:2032.94px;top:1244.80px;font-size:28px;line-height:28px;color:#161c52;letter-spacing:2.644px;">06/03/2023</div>
<div class="t" id="t79" style="left:1685.25px;top:1369.64px;font-size:25px;line-height:25px;color:#6d76a0;letter-spacing:0.106px;">Display on a page:</div>
<div class="t" id="t80" style="left:1914.65px;top:1369.64px;font-size:25px;line-height:25px;color:#2b3570;-webkit-text-stroke:0.4px #2b3570;letter-spacing:1.600px;">10</div>
<svg style="left:1955px;top:1376px;" width="18" height="12" viewBox="0 0 18 12"><polygon points="0.5,0.8 17,0.8 8.75,11" fill="#333"/></svg>
<div style="left:2004px;top:1347px;width:60px;height:60px;border:2px solid #eceef4;border-radius:12px;background:#fff"></div>
<svg style="left:2026px;top:1370px;" width="18" height="24" viewBox="0 0 18 24"><polyline points="15,2 4,12 15,22" fill="none" stroke="#e3e6ef" stroke-width="1.8"/></svg>
<div style="left:2084px;top:1347px;width:59px;height:59px;border:2.5px solid #cc1f42;border-radius:12px;background:#fdebef"></div>
<div class="t" id="t81" style="left:2109.25px;top:1366.34px;font-size:25px;line-height:25px;color:#d5234a;-webkit-text-stroke:0.85px #d5234a;">1</div>
<div style="left:2164px;top:1347px;width:60px;height:60px;border:2px solid #eceef4;border-radius:12px;background:#fff"></div>
<svg style="left:2188px;top:1370px;" width="18" height="24" viewBox="0 0 18 24"><polyline points="3,2 14,12 3,22" fill="none" stroke="#e3e6ef" stroke-width="1.8"/></svg>
</body></html>
